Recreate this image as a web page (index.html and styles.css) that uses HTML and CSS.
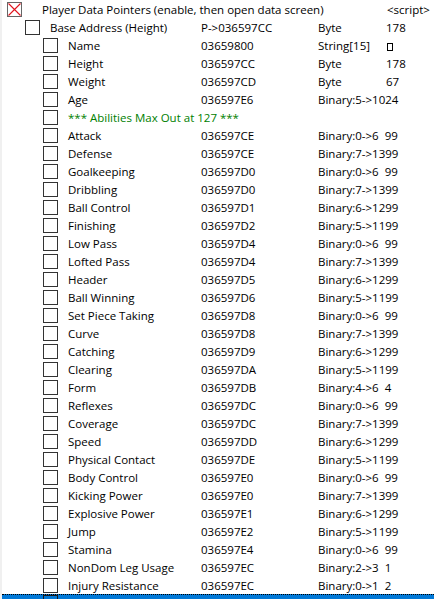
FILE: index.html
```html
<!DOCTYPE html>
<html>
<head>
<meta charset="utf-8">
<link rel="stylesheet" href="styles.css">
</head>
<body>
<div class="table">
  <div class="row top">
    <span class="box crossed"><svg viewBox="0 0 15 15" width="15" height="15"><path d="M1.5 1.5L13.5 13.5M13.5 1.5L1.5 13.5" stroke="#e0141e" stroke-width="1.1"/></svg></span>
    <span class="desc">Player Data Pointers (enable, then open data screen)</span>
    <span class="val script">&lt;script&gt;</span>
  </div>
  <div class="row l1">
    <span class="box"></span>
    <span class="desc">Base Address (Height)</span>
    <span class="addr">P-&gt;036597CC</span>
    <span class="type">Byte</span>
    <span class="val">178</span>
  </div>
  <div class="row l2"><span class="box"></span><span class="desc">Name</span><span class="addr">03659800</span><span class="type">String[15]</span><span class="val"><i class="missing"></i></span></div>
  <div class="row l2"><span class="box"></span><span class="desc">Height</span><span class="addr">036597CC</span><span class="type">Byte</span><span class="val">178</span></div>
  <div class="row l2"><span class="box"></span><span class="desc">Weight</span><span class="addr">036597CD</span><span class="type">Byte</span><span class="val">67</span></div>
  <div class="row l2"><span class="box"></span><span class="desc">Age</span><span class="addr">036597E6</span><span class="type">Binary:5-&gt;1024</span></div>
  <div class="row l2"><span class="box"></span><span class="desc note">*** Abilities Max Out at 127 ***</span></div>
  <div class="row l2"><span class="box"></span><span class="desc">Attack</span><span class="addr">036597CE</span><span class="type">Binary:0-&gt;6&nbsp; 99</span></div>
  <div class="row l2"><span class="box"></span><span class="desc">Defense</span><span class="addr">036597CE</span><span class="type">Binary:7-&gt;1399</span></div>
  <div class="row l2"><span class="box"></span><span class="desc">Goalkeeping</span><span class="addr">036597D0</span><span class="type">Binary:0-&gt;6&nbsp; 99</span></div>
  <div class="row l2"><span class="box"></span><span class="desc">Dribbling</span><span class="addr">036597D0</span><span class="type">Binary:7-&gt;1399</span></div>
  <div class="row l2"><span class="box"></span><span class="desc">Ball Control</span><span class="addr">036597D1</span><span class="type">Binary:6-&gt;1299</span></div>
  <div class="row l2"><span class="box"></span><span class="desc">Finishing</span><span class="addr">036597D2</span><span class="type">Binary:5-&gt;1199</span></div>
  <div class="row l2"><span class="box"></span><span class="desc">Low Pass</span><span class="addr">036597D4</span><span class="type">Binary:0-&gt;6&nbsp; 99</span></div>
  <div class="row l2"><span class="box"></span><span class="desc">Lofted Pass</span><span class="addr">036597D4</span><span class="type">Binary:7-&gt;1399</span></div>
  <div class="row l2"><span class="box"></span><span class="desc">Header</span><span class="addr">036597D5</span><span class="type">Binary:6-&gt;1299</span></div>
  <div class="row l2"><span class="box"></span><span class="desc">Ball Winning</span><span class="addr">036597D6</span><span class="type">Binary:5-&gt;1199</span></div>
  <div class="row l2"><span class="box"></span><span class="desc">Set Piece Taking</span><span class="addr">036597D8</span><span class="type">Binary:0-&gt;6&nbsp; 99</span></div>
  <div class="row l2"><span class="box"></span><span class="desc">Curve</span><span class="addr">036597D8</span><span class="type">Binary:7-&gt;1399</span></div>
  <div class="row l2"><span class="box"></span><span class="desc">Catching</span><span class="addr">036597D9</span><span class="type">Binary:6-&gt;1299</span></div>
  <div class="row l2"><span class="box"></span><span class="desc">Clearing</span><span class="addr">036597DA</span><span class="type">Binary:5-&gt;1199</span></div>
  <div class="row l2"><span class="box"></span><span class="desc">Form</span><span class="addr">036597DB</span><span class="type">Binary:4-&gt;6&nbsp; 4</span></div>
  <div class="row l2"><span class="box"></span><span class="desc">Reflexes</span><span class="addr">036597DC</span><span class="type">Binary:0-&gt;6&nbsp; 99</span></div>
  <div class="row l2"><span class="box"></span><span class="desc">Coverage</span><span class="addr">036597DC</span><span class="type">Binary:7-&gt;1399</span></div>
  <div class="row l2"><span class="box"></span><span class="desc">Speed</span><span class="addr">036597DD</span><span class="type">Binary:6-&gt;1299</span></div>
  <div class="row l2"><span class="box"></span><span class="desc">Physical Contact</span><span class="addr">036597DE</span><span class="type">Binary:5-&gt;1199</span></div>
  <div class="row l2"><span class="box"></span><span class="desc">Body Control</span><span class="addr">036597E0</span><span class="type">Binary:0-&gt;6&nbsp; 99</span></div>
  <div class="row l2"><span class="box"></span><span class="desc">Kicking Power</span><span class="addr">036597E0</span><span class="type">Binary:7-&gt;1399</span></div>
  <div class="row l2"><span class="box"></span><span class="desc">Explosive Power</span><span class="addr">036597E1</span><span class="type">Binary:6-&gt;1299</span></div>
  <div class="row l2"><span class="box"></span><span class="desc">Jump</span><span class="addr">036597E2</span><span class="type">Binary:5-&gt;1199</span></div>
  <div class="row l2"><span class="box"></span><span class="desc">Stamina</span><span class="addr">036597E4</span><span class="type">Binary:0-&gt;6&nbsp; 99</span></div>
  <div class="row l2"><span class="box"></span><span class="desc">NonDom Leg Usage</span><span class="addr">036597EC</span><span class="type">Binary:2-&gt;3&nbsp; 1</span></div>
  <div class="row l2"><span class="box"></span><span class="desc">Injury Resistance</span><span class="addr">036597EC</span><span class="type">Binary:0-&gt;1&nbsp; 2</span></div>
  <div class="row l2 selected"><span class="box"></span></div>
</div>
</body>
</html>
```
FILE: styles.css
```css
html, body {
  margin: 0;
  padding: 0;
  background: #ffffff;
  overflow: hidden;
}

body {
  font-family: "Open Sans", "Noto Sans", sans-serif;
  font-size: 11.5px;
  color: #000;
}

.table {
  height: 599px;
  border-left: 2px solid #f0f0f0;
  box-sizing: border-box;
  overflow: hidden;
}

.row {
  display: flex;
  align-items: center;
  height: 18px;
  white-space: nowrap;
}

.box {
  flex: none;
  width: 15px;
  height: 15px;
  box-sizing: border-box;
  border: 1px solid #333;
  background: #fff;
  margin-top: 1px;
}

/* checked group box: red cross drawn over the frame */
.box.crossed {
  border-color: #666;
  position: relative;
}

.box.crossed svg {
  position: absolute;
  left: -1px;
  top: -1px;
}

.top .box { margin-left: 5px; }
.top .desc { margin-left: 20px; width: 345px; }

.l1 .box { margin-left: 23px; }
.l1 .desc { margin-left: 10px; width: 151px; }

.l2 .box { margin-left: 41px; }
.l2 .desc { margin-left: 10px; width: 133px; }

.addr { width: 117px; flex: none; }
.type { width: 68px; flex: none; }
.val { flex: none; }

.note { color: #008000; }

.missing {
  display: inline-block;
  width: 6px;
  height: 8px;
  border: 1px solid #000;
  box-sizing: border-box;
  margin-left: 1px;
  vertical-align: -1px;
}

/* focused row peeking in at the bottom edge */
.selected {
  background: #0078d7;
  border-top: 1px dotted #000;
  box-sizing: border-box;
  align-items: flex-start;
}

.selected .box {
  margin-top: 0;
  border-color: #1a1a1a;
  background: #0078d7;
}
```
